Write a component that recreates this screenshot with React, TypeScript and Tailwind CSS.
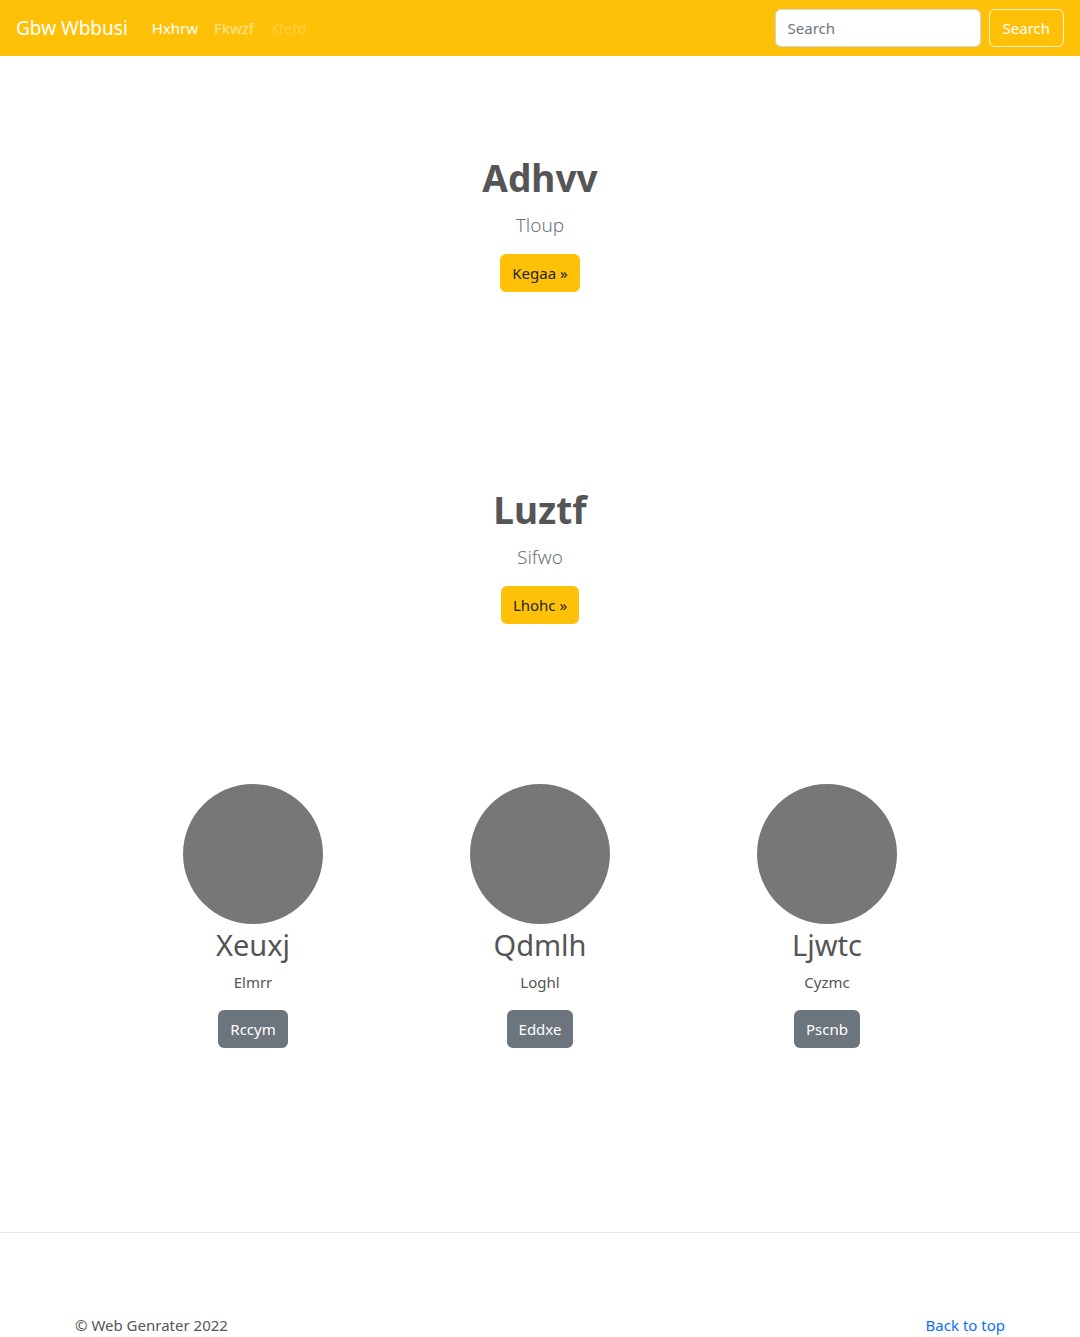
const heroes = [
  { title: "Adhvv", lead: "Tloup", cta: "Kegaa" },
  { title: "Luztf", lead: "Sifwo", cta: "Lhohc" },
];

const people = [
  { name: "Xeuxj", sub: "Elmrr", btn: "Rccym" },
  { name: "Qdmlh", sub: "Loghl", btn: "Eddxe" },
  { name: "Ljwtc", sub: "Cyzmc", btn: "Pscnb" },
];

function NavBar() {
  return (
    <nav className="h-14 bg-[#ffc107] flex items-center justify-between px-4">
      <div className="flex items-center">
        <a href="#" className="text-white text-[19px] mr-4">Gbw Wbbusi</a>
        <ul className="flex text-[15px]">
          <li><a href="#" className="px-2 text-white">Hxhrw</a></li>
          <li><a href="#" className="px-2 text-white/55">Fkwzf</a></li>
          <li><span className="px-2 text-white/25">Xfefd</span></li>
        </ul>
      </div>
      <form className="flex items-center gap-2">
        <input
          type="search"
          placeholder="Search"
          className="w-[206px] h-[38px] rounded-md border border-[#ced4da] bg-white px-3 text-[15px] text-[#212529] placeholder:text-[#6c757d] outline-none"
        />
        <button type="button" className="h-[38px] px-[13px] rounded-md border border-white/80 text-white text-[15px]">
          Search
        </button>
      </form>
    </nav>
  );
}

function Hero({ title, lead, cta }: { title: string; lead: string; cta: string }) {
  return (
    <section className="pt-[98px] pb-[96px] text-center">
      <h1 className="text-[37px] leading-[48px] font-bold text-[#555] mb-2">{title}</h1>
      <p className="text-[19px] leading-[30px] font-light text-[#6c757d] mb-[14px]">{lead}</p>
      <a href="#" className="inline-flex items-center h-[38px] px-3 rounded-md bg-[#ffc107] text-[#212529] text-[15px]">
        {cta} »
      </a>
    </section>
  );
}

export default function App() {
  return (
    <div className="min-h-screen bg-white font-['Noto_Sans',sans-serif] text-[#212529]">
      <NavBar />
      {heroes.map((h) => (
        <Hero key={h.title} {...h} />
      ))}
      <section className="mt-[64px] w-[861px] mx-auto grid grid-cols-3">
        {people.map((p) => (
          <div key={p.name} className="flex flex-col items-center">
            <div className="w-[140px] h-[140px] rounded-full bg-[#777]" />
            <h2 className="text-[29px] leading-[40px] text-[#555] mt-[1px]">{p.name}</h2>
            <p className="text-[15px] leading-[24px] text-[#555] mt-[5px]">{p.sub}</p>
            <a href="#" className="mt-[16px] inline-flex items-center h-[38px] px-3 rounded-md bg-[#6c757d] text-white text-[15px]">
              {p.btn}
            </a>
          </div>
        ))}
      </section>
      <hr className="mt-[184px] border-t border-[#e5e5e5]" />
      <footer className="pt-[80px] px-[75px] flex justify-between text-[15px] leading-[24px] text-[#555]">
        <p>© Web Genrater 2022</p>
        <a href="#" className="text-[#0d6efd]">Back to top</a>
      </footer>
    </div>
  );
}
